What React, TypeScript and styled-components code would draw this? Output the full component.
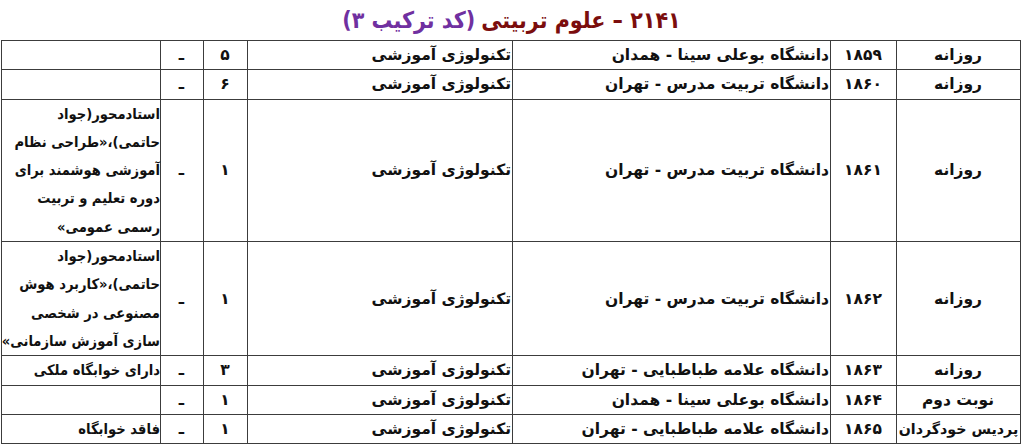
import React from 'react';
import styled, { createGlobalStyle } from 'styled-components';

const GlobalStyle = createGlobalStyle`
  html, body {
    margin: 0;
    padding: 0;
    background: #ffffff;
  }
  body {
    font-family: "DejaVu Sans", "Noto Sans", sans-serif;
  }
`;

const Page = styled.div`
  direction: rtl;
  width: 1023px;
  padding: 0 2px;
  box-sizing: border-box;
`;

const Title = styled.h1`
  margin: 0;
  height: 40px;
  display: flex;
  align-items: center;
  justify-content: center;
  gap: 6px;
  font-family: "DejaVu Sans Condensed", "DejaVu Sans", sans-serif;
  font-stretch: condensed;
  font-size: 23px;
  font-weight: bold;
  line-height: 1;
  color: #7b0d0d;
`;

const TitleCode = styled.span`
  color: #7030a0;
`;

const Table = styled.table`
  width: 1019px;
  border-collapse: collapse;
  table-layout: fixed;
  font-size: 15.5px;
  font-weight: bold;
  color: #111111;
`;

const Col = styled.col<{ $w: number }>`
  width: ${(p) => p.$w}px;
`;

const Cell = styled.td<{ $align?: 'center' | 'right'; $size?: number }>`
  border: 1px solid #3c3c3c;
  padding: 0 ${(p) => (p.$size ? 0 : 1)}px 0 0;
  line-height: 28.3px;
  font-size: ${(p) => (p.$size ? `${p.$size}px` : 'inherit')};
  text-align: ${(p) => p.$align ?? 'right'};
  vertical-align: middle;
  white-space: nowrap;
`;

const NoteLine = styled.div`
  font-family: "DejaVu Sans Condensed", "DejaVu Sans", sans-serif;
  font-stretch: condensed;
  font-size: 14.6px;
  white-space: nowrap;
`;

interface Row {
  type: string;
  code: string;
  uni: string;
  field: string;
  cap: string;
  note?: string[];
}

const rows: Row[] = [
  { type: 'روزانه', code: '۱۸۵۹', uni: 'دانشگاه بوعلی سینا - همدان', field: 'تکنولوژی آموزشی', cap: '۵' },
  { type: 'روزانه', code: '۱۸۶۰', uni: 'دانشگاه تربیت مدرس - تهران', field: 'تکنولوژی آموزشی', cap: '۶' },
  {
    type: 'روزانه',
    code: '۱۸۶۱',
    uni: 'دانشگاه تربیت مدرس - تهران',
    field: 'تکنولوژی آموزشی',
    cap: '۱',
    note: ['استادمحور(جواد', 'حاتمی)،«طراحی نظام', 'آموزشی هوشمند برای', 'دوره تعلیم و تربیت', 'رسمی عمومی»'],
  },
  {
    type: 'روزانه',
    code: '۱۸۶۲',
    uni: 'دانشگاه تربیت مدرس - تهران',
    field: 'تکنولوژی آموزشی',
    cap: '۱',
    note: ['استادمحور(جواد', 'حاتمی)،«کاربرد هوش', 'مصنوعی در شخصی', 'سازی آموزش سازمانی»'],
  },
  { type: 'روزانه', code: '۱۸۶۳', uni: 'دانشگاه علامه طباطبایی - تهران', field: 'تکنولوژی آموزشی', cap: '۳', note: ['دارای خوابگاه ملکی'] },
  { type: 'نوبت دوم', code: '۱۸۶۴', uni: 'دانشگاه بوعلی سینا - همدان', field: 'تکنولوژی آموزشی', cap: '۱' },
  { type: 'پردیس خودگردان', code: '۱۸۶۵', uni: 'دانشگاه علامه طباطبایی - تهران', field: 'تکنولوژی آموزشی', cap: '۱', note: ['فاقد خوابگاه'] },
];

const widths = [124, 66, 318, 265, 44, 43, 159];

const App: React.FC = () => {
  return (
    <Page>
      <GlobalStyle />
      <Title>
        <span>۲۱۴۱ – علوم تربیتی</span>
        <TitleCode>(کد ترکیب ۳)</TitleCode>
      </Title>
      <Table>
        <colgroup>
          {widths.map((w, i) => (
            <Col key={i} $w={w} />
          ))}
        </colgroup>
        <tbody>
          {rows.map((r) => (
            <tr key={r.code}>
              <Cell $align="center" $size={r.type.length > 10 ? 14.2 : undefined}>
                {r.type}
              </Cell>
              <Cell $align="center">{r.code}</Cell>
              <Cell>{r.uni}</Cell>
              <Cell>{r.field}</Cell>
              <Cell $align="center">{r.cap}</Cell>
              <Cell $align="center">ـ</Cell>
              <Cell $size={15}>
                {r.note ? r.note.map((line) => <NoteLine key={line}>{line}</NoteLine>) : null}
              </Cell>
            </tr>
          ))}
        </tbody>
      </Table>
    </Page>
  );
};

export default App;
